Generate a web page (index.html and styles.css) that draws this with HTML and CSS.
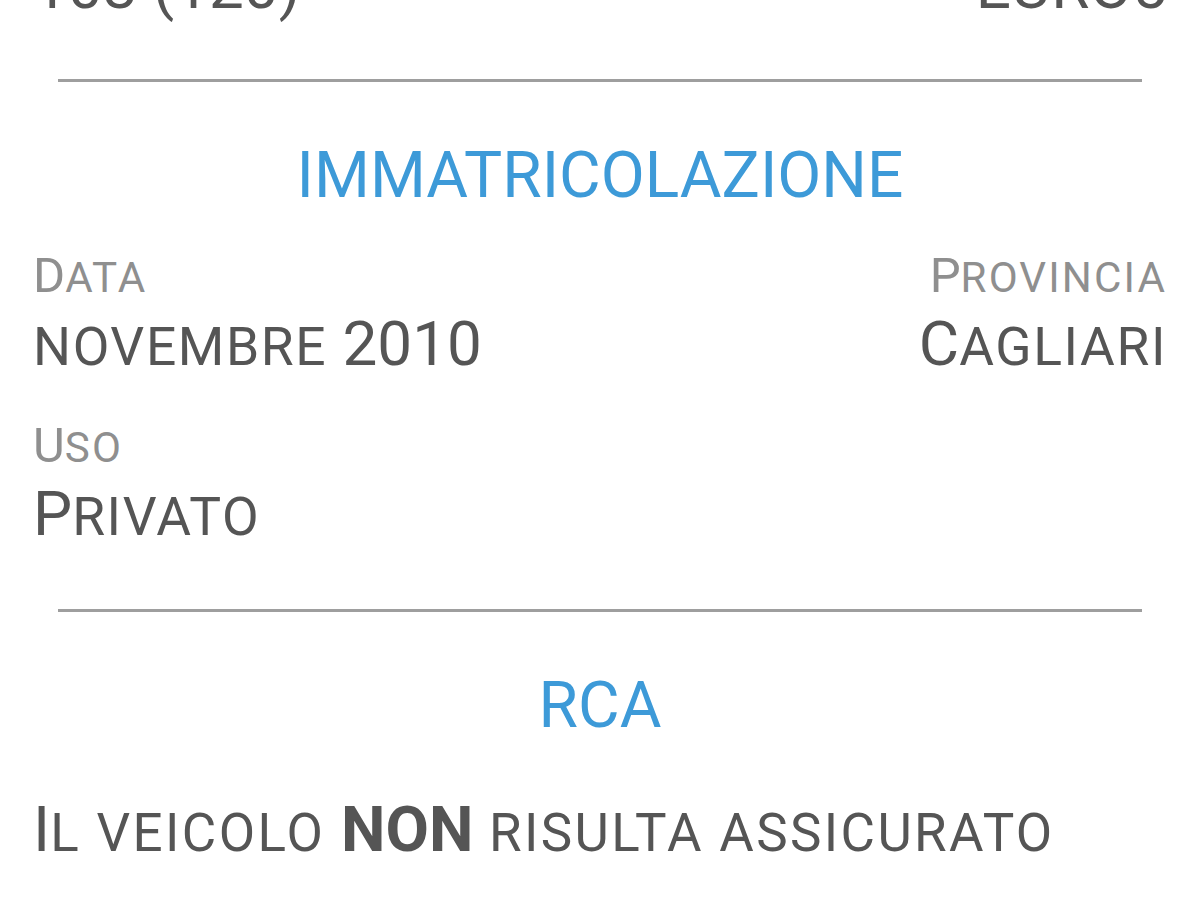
FILE: index.html
```html
<!DOCTYPE html>
<html lang="it">
<head>
    <meta charset="UTF-8">
    <meta name="viewport" content="width=device-width, initial-scale=1.0">
    <title>Dettaglio veicolo</title>
    <link rel="stylesheet" href="styles.css">
</head>

<body>
    <main class="page">
        <!-- Motore (scrolled partly out of view) -->
        <section class="block block-top">
            <div class="fields">
                <div class="field">
                    <span class="value">103 (120)</span>
                </div>
                <div class="field field-right">
                    <span class="value">EURO5</span>
                </div>
            </div>
        </section>

        <hr class="divider">

        <section class="block">
            <h2 class="block-title">IMMATRICOLAZIONE</h2>
            <div class="fields">
                <div class="field">
                    <span class="label">D<span class="sc">ata</span></span>
                    <span class="value"><span class="sc">novembre</span> 2010</span>
                </div>
                <div class="field field-right">
                    <span class="label">P<span class="sc">rovincia</span></span>
                    <span class="value">C<span class="sc">agliari</span></span>
                </div>
                <div class="field">
                    <span class="label">U<span class="sc">so</span></span>
                    <span class="value">P<span class="sc">rivato</span></span>
                </div>
            </div>
        </section>

        <hr class="divider">

        <section class="block">
            <h2 class="block-title">RCA</h2>
            <p class="notice">I<span class="sc">l veicolo</span> <strong>NON</strong> <span class="sc">risulta assicurato</span></p>
        </section>
    </main>
</body>
</html>
```

FILE: styles.css
```css
body {
    margin: 0;
    padding: 0;
    background-color: #fff;
    font-family: Roboto, "Noto Sans", Arial, sans-serif;
    color: #555;
    overflow: hidden;
}

.page {
    margin-top: -49px;
    padding: 0 33px;
}

.block {
    padding-top: 56px;
}

.block-top {
    padding-top: 0;
    padding-bottom: 56px;
}

.divider {
    border: none;
    height: 3px;
    background: #9e9e9e;
    margin: 59px 25px 0;
}

.block-top + .divider {
    margin-top: 0;
}

.block-title {
    margin: 0;
    font-size: 64px;
    line-height: 76px;
    font-weight: 400;
    color: #3d9ad8;
    text-align: center;
}

.fields {
    display: grid;
    grid-template-columns: 1fr 1fr;
    row-gap: 38px;
}

.block-title + .fields {
    margin-top: 34px;
}

.field {
    display: flex;
    flex-direction: column;
    gap: 4px;
}

.field-right {
    align-items: flex-end;
}

.label {
    font-size: 49px;
    line-height: 56px;
    color: #8f8f8f;
}

.value {
    font-size: 62px;
    line-height: 72px;
    color: #555;
}

/* small caps, drawn as smaller capitals */
.sc {
    text-transform: uppercase;
    font-size: 0.86em;
    line-height: 1;
    letter-spacing: 0.03em;
}

.label .sc {
    letter-spacing: 0.05em;
}

.notice {
    margin: 47px 0 0;
    font-size: 63px;
    line-height: 78px;
    white-space: nowrap;
    color: #555;
}

.notice .sc {
    font-size: 0.84em;
    letter-spacing: 0.045em;
}

.notice strong {
    font-weight: 700;
}
```
